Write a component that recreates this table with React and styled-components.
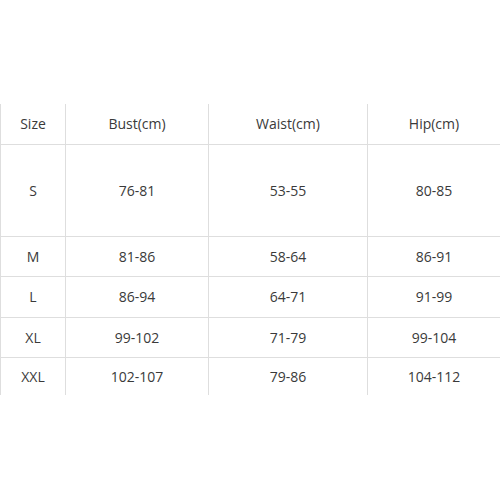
import React from 'react';
import styled, { createGlobalStyle } from 'styled-components';

const GlobalStyle = createGlobalStyle`
  html, body {
    margin: 0;
    padding: 0;
    background: #fff;
  }
  body {
    font-family: "Open Sans", "Liberation Sans", sans-serif;
    color: #3a3a3a;
  }
`;

const Page = styled.div`
  width: 500px;
  height: 500px;
  padding-top: 104px;
  box-sizing: border-box;
`;

const SizeTable = styled.table`
  width: 500px;
  border-collapse: collapse;
  table-layout: fixed;
  font-size: 14px;
  text-align: center;

  col:nth-child(1) { width: 65px; }
  col:nth-child(2) { width: 143px; }
  col:nth-child(3) { width: 159px; }
  col:nth-child(4) { width: 133px; }
`;

const Row = styled.tr`
  height: ${(p) => p.$height}px;
  border-bottom: 1px solid #dedede;
  &:last-child {
    border-bottom: none;
  }
`;

const Cell = styled.td`
  padding: 0;
  border-left: 1px solid #dedede;
  border-right: 1px solid #dedede;
  vertical-align: middle;
  white-space: nowrap;
`;

const rows = [
  { h: 40, cells: ['Size', 'Bust(cm)', 'Waist(cm)', 'Hip(cm)'] },
  { h: 92, cells: ['S', '76-81', '53-55', '80-85'] },
  { h: 40, cells: ['M', '81-86', '58-64', '86-91'] },
  { h: 41, cells: ['L', '86-94', '64-71', '91-99'] },
  { h: 40, cells: ['XL', '99-102', '71-79', '99-104'] },
  { h: 38, cells: ['XXL', '102-107', '79-86', '104-112'] },
];

export default function App() {
  return (
    <>
      <GlobalStyle />
      <Page>
        <SizeTable>
          <colgroup>
            <col />
            <col />
            <col />
            <col />
          </colgroup>
          <tbody>
            {rows.map((r) => (
              <Row key={r.cells[0]} $height={r.h}>
                {r.cells.map((c, i) => (
                  <Cell key={i}>{c}</Cell>
                ))}
              </Row>
            ))}
          </tbody>
        </SizeTable>
      </Page>
    </>
  );
}
